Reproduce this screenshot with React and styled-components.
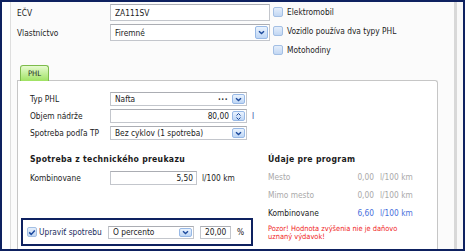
import React from 'react';
import styled, { createGlobalStyle } from 'styled-components';

const navy = '#0e2160';

const GlobalStyle = createGlobalStyle`
  html, body {
    margin: 0;
    padding: 0;
    background: #fff;
  }
  body {
    font-family: "DejaVu Sans Condensed", "DejaVu Sans", "Liberation Sans", sans-serif;
    font-size: 8.3px;
    color: #1b1b1b;
  }
`;

const Frame = styled.div`
  width: 465px;
  height: 251px;
  box-sizing: border-box;
  border: 2px solid ${navy};
  display: flex;
  overflow: hidden;
  background: #fff;
`;
const LeftGutter = styled.div`
  flex: none;
  width: 8px;
  border-right: 1px solid #dedede;
  background: #fff;
`;
const RightGutter = styled.div`
  flex: none;
  width: 6px;
  border-left: 3px solid #d8d8d8;
  background: #f8f8f8;
`;
const Content = styled.div`
  flex: 1;
  min-width: 0;
  display: flex;
  flex-direction: column;
  padding: 2px 0 0 6px;
  background: #fbfbfb;
`;

const TopSection = styled.div`
  display: flex;
  align-items: flex-start;
`;
const FieldGrid = styled.div`
  display: grid;
  grid-template-columns: ${p => p.$cols};
  grid-auto-rows: ${p => p.$row}px;
  row-gap: ${p => p.$gap}px;
  align-items: center;
  margin-top: ${p => p.$top || 0}px;
`;
const Label = styled.span`
  white-space: nowrap;
  color: ${p => p.$color || '#1b1b1b'};
`;
const Unit = styled.span`
  padding-left: ${p => p.$pad || 5}px;
  white-space: nowrap;
  color: ${p => p.$color || '#1b1b1b'};
`;

const Field = styled.div`
  box-sizing: border-box;
  height: 100%;
  width: ${p => (p.$w ? `${p.$w}px` : 'auto')};
  display: flex;
  align-items: center;
  background: #fff;
  border: 1px solid #c3c6cc;
  border-top-color: #abadb3;
  padding-left: 4px;
`;
const FieldText = styled.span`
  flex: 1;
  white-space: nowrap;
  overflow: hidden;
  text-align: ${p => (p.$right ? 'right' : 'left')};
  padding-right: 3px;
`;
const Dots = styled.span`
  font-weight: bold;
  letter-spacing: 0.5px;
  padding-right: 4px;
  color: #333;
`;
const DropBtn = styled.span`
  flex: none;
  box-sizing: border-box;
  width: 13px;
  height: calc(100% - 2px);
  margin-right: 1px;
  border: 1px solid #98b9e6;
  border-radius: 2px;
  background: linear-gradient(#eaf3fe, #bed6f5);
  display: flex;
  align-items: center;
  justify-content: center;
`;

const CheckList = styled.div`
  display: flex;
  flex-direction: column;
  margin: -1.5px 0 0 3px;
`;
const CheckItem = styled.div`
  height: 19px;
  display: flex;
  align-items: center;
  gap: 4px;
  white-space: nowrap;
`;
const Box = styled.span`
  flex: none;
  box-sizing: border-box;
  width: 10px;
  height: 10px;
  border: 1px solid #a3bfe4;
  border-radius: 2px;
  background: linear-gradient(#e4eefb, #c2d7f3);
  display: flex;
  align-items: center;
  justify-content: center;
`;

const Tab = styled.div`
  position: relative;
  z-index: 1;
  box-sizing: border-box;
  width: 29px;
  height: 16px;
  margin: 5.5px 0 0 3px;
  border: 1px solid #7dbb4c;
  border-bottom: none;
  border-radius: 3px 3px 0 0;
  background: linear-gradient(#e6fbd0, #9fe262);
  display: flex;
  align-items: center;
  justify-content: center;
  font-size: 7.6px;
`;
const Panel = styled.div`
  flex: 1;
  box-sizing: border-box;
  width: 421px;
  margin-top: -1px;
  border: 1px solid #c6c6c6;
  border-bottom: none;
  border-radius: 0 3px 0 0;
  background: #fff;
  padding: 11px 0 0 12px;
`;

const Lower = styled.div`
  display: grid;
  grid-template-columns: 238px 1fr;
  margin-top: 13px;
`;
const Column = styled.div`
  display: flex;
  flex-direction: column;
`;
const Heading = styled.div`
  font-weight: bold;
  font-size: 8.6px;
  letter-spacing: 0.3px;
  line-height: 12px;
  white-space: nowrap;
`;
const ValueList = styled.div`
  margin-top: 3px;
`;
const ValueRow = styled.div`
  display: grid;
  grid-template-columns: 80px 26px auto;
  height: 18px;
  align-items: center;
  color: ${p => p.$color};
`;
const Value = styled.span`
  text-align: right;
  white-space: nowrap;
  color: ${p => p.$color};
`;
const Warning = styled.div`
  margin-top: 3px;
  color: #f01e1e;
  font-size: 7.4px;
  line-height: 8px;
  width: 150px;
`;
const Highlight = styled.div`
  box-sizing: border-box;
  width: 232px;
  height: 28px;
  margin: 33px 0 0 -9px;
  border: 2px solid ${navy};
  display: flex;
  align-items: center;
  padding-left: 4px;
`;
const HighlightLabel = styled.span`
  width: 71px;
  padding-left: 2px;
  box-sizing: border-box;
  white-space: nowrap;
  color: #1b2d5e;
`;
const SmallField = styled.div`
  height: 13px;
  display: flex;
  margin-right: 6px;
`;

const Chevron = () => (
  <svg width="7" height="5" viewBox="0 0 7 5">
    <path d="M1 1.2 L3.5 3.6 L6 1.2" fill="none" stroke="#1d4a9c" strokeWidth="1.4" />
  </svg>
);
const Spin = () => (
  <svg width="7" height="9" viewBox="0 0 7 9">
    <path d="M1.5 3.5 L3.5 1.5 L5.5 3.5 M1.5 5.5 L3.5 7.5 L5.5 5.5" fill="none" stroke="#1d4a9c" strokeWidth="1" />
  </svg>
);
const Tick = () => (
  <svg width="8" height="7" viewBox="0 0 8 7">
    <path d="M1.2 3.4 L3.2 5.4 L6.8 1.4" fill="none" stroke="#1c4aa0" strokeWidth="1.5" />
  </svg>
);

const Select = ({ value, w, dots }) => (
  <Field $w={w}>
    <FieldText>{value}</FieldText>
    {dots && <Dots>···</Dots>}
    <DropBtn>
      <Chevron />
    </DropBtn>
  </Field>
);

const Check = ({ label, checked }) => (
  <CheckItem>
    <Box>{checked && <Tick />}</Box>
    {label}
  </CheckItem>
);

const programRows = [
  { label: 'Mesto', value: '0,00', color: '#a9a9a9' },
  { label: 'Mimo mesto', value: '0,00', color: '#a9a9a9' },
  { label: 'Kombinovane', value: '6,60', color: '#4a6fdc', labelColor: '#1b1b1b' },
];

const App = () => (
  <>
    <GlobalStyle />
    <Frame>
      <LeftGutter />
      <Content>
        <TopSection>
          <FieldGrid $cols="93px 160px" $row={17} $gap={3}>
            <Label>EČV</Label>
            <Field>
              <FieldText>ZA111SV</FieldText>
            </Field>
            <Label>Vlastníctvo</Label>
            <Select value="Firemné" />
          </FieldGrid>
          <CheckList>
            <Check label="Elektromobil" />
            <Check label="Vozidlo používa dva typy PHL" />
            <Check label="Motohodiny" />
          </CheckList>
        </TopSection>

        <Tab>PHL</Tab>
        <Panel>
          <FieldGrid $cols="80px 137px auto" $row={14} $gap={3}>
            <Label>Typ PHL</Label>
            <Select value="Nafta" dots />
            <span />
            <Label>Objem nádrže</Label>
            <Field>
              <FieldText $right>80,00</FieldText>
              <DropBtn>
                <Spin />
              </DropBtn>
            </Field>
            <Unit $color="#2c3f9e">l</Unit>
            <Label>Spotreba podľa TP</Label>
            <Select value="Bez cyklov (1 spotreba)" />
            <span />
          </FieldGrid>

          <Lower>
            <Column>
              <Heading>Spotreba z technického preukazu</Heading>
              <FieldGrid $cols="80px 87px auto" $row={14} $gap={0} $top={6}>
                <Label>Kombinovane</Label>
                <Field>
                  <FieldText $right>5,50</FieldText>
                </Field>
                <Unit>l/100 km</Unit>
              </FieldGrid>
              <Highlight>
                <Box>
                  <Tick />
                </Box>
                <HighlightLabel>Upraviť spotrebu</HighlightLabel>
                <SmallField>
                  <Select value="O percento" w={86} />
                </SmallField>
                <SmallField>
                  <Field $w={31}>
                    <FieldText>20,00</FieldText>
                  </Field>
                </SmallField>
                <Label>%</Label>
              </Highlight>
            </Column>
            <Column>
              <Heading>Údaje pre program</Heading>
              <ValueList>
                {programRows.map(row => (
                  <ValueRow key={row.label} $color={row.labelColor || row.color}>
                    <span>{row.label}</span>
                    <Value $color={row.color}>{row.value}</Value>
                    <Unit $pad={6} $color={row.color}>
                      l/100 km
                    </Unit>
                  </ValueRow>
                ))}
              </ValueList>
              <Warning>Pozor! Hodnota zvýšenia nie je daňovo uznaný výdavok!</Warning>
            </Column>
          </Lower>
        </Panel>
      </Content>
      <RightGutter />
    </Frame>
  </>
);

export default App;
